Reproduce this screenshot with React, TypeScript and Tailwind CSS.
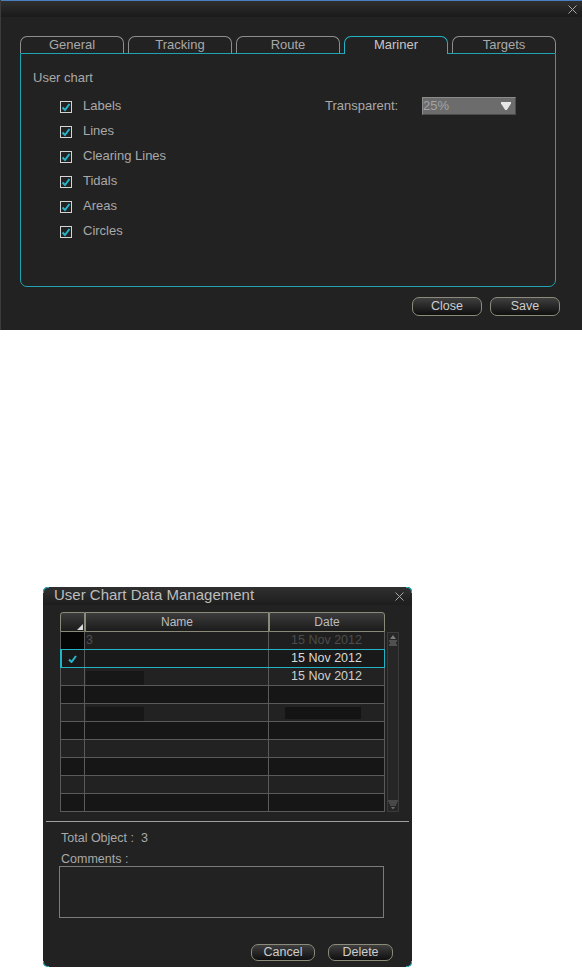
import { ReactNode } from "react";

const tabs = ["General", "Tracking", "Route", "Mariner", "Targets"];
const layers = ["Labels", "Lines", "Clearing Lines", "Tidals", "Areas", "Circles"];

function CloseX({ className }: { className?: string }) {
  return (
    <svg width="9" height="9" viewBox="0 0 9 9" className={className}>
      <path d="M0.5 0.5 L8.5 8.5 M8.5 0.5 L0.5 8.5" stroke="#a9a9a9" strokeWidth="1" />
    </svg>
  );
}

function CheckBox() {
  return (
    <svg width="12" height="12" viewBox="0 0 12 12">
      <rect x="0.5" y="0.5" width="11" height="11" fill="none" stroke="#d4d4d4" />
      <path d="M2.5 6.5 L5 9 L9.5 3" fill="none" stroke="#26b4c9" strokeWidth="2" />
    </svg>
  );
}

function Btn({ children, w }: { children: ReactNode; w: string }) {
  return (
    <button
      className={`${w} rounded-[7px] border border-[#8c8a78] bg-linear-to-b from-[#404040] to-[#101010] text-[12.5px] text-[#cdcdcd] leading-none`}
    >
      {children}
    </button>
  );
}

type Row = {
  name?: string;
  date?: string;
  dateColor?: string;
  bg: string;
  chkBg?: string;
  selected?: boolean;
  redactName?: boolean;
  redactDate?: boolean;
};

const rows: Row[] = [
  { name: "3", date: "15 Nov 2012", dateColor: "text-[#4c4c4c]", bg: "bg-[#1f1f1f]", chkBg: "bg-[#050505]" },
  { date: "15 Nov 2012", dateColor: "text-[#dadada]", bg: "bg-[#191919]", selected: true },
  { date: "15 Nov 2012", dateColor: "text-[#cfcfcf]", bg: "bg-[#222]", redactName: true },
  { bg: "bg-[#161616]" },
  { bg: "bg-[#222]", redactName: true, redactDate: true },
  { bg: "bg-[#161616]" },
  { bg: "bg-[#222]" },
  { bg: "bg-[#161616]" },
  { bg: "bg-[#222]" },
  { bg: "bg-[#161616]" },
];

export default function App() {
  return (
    <div className="w-[582px] h-[972px] bg-white font-['Liberation_Sans',Arial,sans-serif]">
      {/* Settings dialog */}
      <div className="h-[330px] bg-[#222] border-l border-[#3c3c3c] flex flex-col">
        <div className="h-px bg-[#4a80c2]" />
        <div className="h-[16px] bg-linear-to-b from-[#2f2f2f] to-[#1a1a1a] flex items-center justify-end pr-[5px]">
          <CloseX />
        </div>

        <div className="mt-[19px] ml-[19px] w-[536px]">
          <div className="flex gap-[4px] items-end">
            {tabs.map((t) =>
              t === "Mariner" ? (
                <div
                  key={t}
                  className="relative z-10 -mb-px w-[104px] h-[18px] rounded-t-[7px] border border-b-0 border-[#23b3c6] bg-[#222] text-center text-[13px] leading-[16px] text-[#c6c6c6]"
                >
                  {t}
                </div>
              ) : (
                <div
                  key={t}
                  className="w-[104px] h-[17px] rounded-t-[7px] border border-b-0 border-[#8e8e8e] text-center text-[13px] leading-[16px] text-[#a9a9a9]"
                >
                  {t}
                </div>
              )
            )}
          </div>
          <div className="h-[234px] border border-[#1fa2b4] rounded-b-[7px] pl-[12px] pt-[16px]">
            <div className="text-[13px] leading-[16px] text-[#a9a9a9]">User chart</div>
            <div className="mt-[8px] ml-[27px] flex flex-col">
              {layers.map((l, i) => (
                <div key={l} className="h-[25px] flex items-center">
                  <div className="w-[265px] flex items-center gap-[11px]">
                    <CheckBox />
                    <span className="text-[13px] leading-[16px] text-[#a9a9a9] -mt-[2px]">{l}</span>
                  </div>
                  {i === 0 && (
                    <>
                      <span className="w-[97px] text-[13px] leading-[16px] text-[#a9a9a9] -mt-[2px]">Transparent:</span>
                      <div className="w-[94px] h-[18px] -mt-[2px] bg-[#6c6c6c] border border-t-[#8c8c8c] border-l-[#8c8c8c] border-b-[#4c4c4c] border-r-[#4c4c4c] flex items-center justify-between pr-[4px]">
                        <span className="text-[13px] leading-none text-[#a3a3a3]">25%</span>
                        <svg width="10" height="8" viewBox="0 0 10 8">
                          <path d="M0 0 H10 V1.5 L5.8 8 H4.2 L0 1.5 Z" fill="#e6e6e6" />
                        </svg>
                      </div>
                    </>
                  )}
                </div>
              ))}
            </div>
          </div>
        </div>

        <div className="mt-[10px] flex justify-end gap-[8px] pr-[22px]">
          <Btn w="w-[70px] h-[19px]">Close</Btn>
          <Btn w="w-[70px] h-[19px]">Save</Btn>
        </div>
      </div>

      {/* User Chart Data Management dialog */}
      <div className="relative ml-[43px] mt-[257px] w-[369px] h-[380px] bg-[#222] rounded-[5px] flex flex-col">
        <div className="absolute left-0 top-0 w-[6px] h-[6px] border-t border-l border-[#25b4c8] rounded-tl-[5px]" />
        <div className="absolute right-0 top-0 w-[6px] h-[6px] border-t border-r border-[#25b4c8] rounded-tr-[5px]" />
        <div className="absolute left-0 bottom-0 w-[6px] h-[6px] border-b border-l border-[#25b4c8] rounded-bl-[5px]" />
        <div className="absolute right-0 bottom-0 w-[6px] h-[6px] border-b border-r border-[#25b4c8] rounded-br-[5px]" />

        <div className="h-[18px] rounded-t-[5px] bg-linear-to-b from-[#303030] to-[#1d1d1d] flex items-center justify-between pl-[11px] pr-[8px]">
          <span className="text-[15px] leading-[18px] text-[#bdbdbd] -mt-[2px]">User Chart Data Management</span>
          <CloseX />
        </div>

        <div className="mt-[7px] ml-[17px] flex gap-[2px]">
          <div className="w-[325px]">
            {/* header */}
            <div className="flex h-[20px]">
              <div className="relative w-[25px] border border-[#8a8a7a] rounded-tl-[3px] bg-linear-to-b from-[#3c3c3c] to-[#1c1c1c]">
                <svg width="6" height="6" viewBox="0 0 6 6" className="absolute right-[1px] bottom-[1px]">
                  <path d="M6 0 V6 H0 Z" fill="#dcdcdc" />
                </svg>
              </div>
              <div className="w-[184px] border border-[#8a8a7a] bg-linear-to-b from-[#3c3c3c] to-[#1c1c1c] text-center text-[12px] leading-[18px] text-[#bcbcbc]">
                Name
              </div>
              <div className="w-[116px] border border-[#8a8a7a] rounded-tr-[3px] bg-linear-to-b from-[#3c3c3c] to-[#1c1c1c] text-center text-[12px] leading-[18px] text-[#bcbcbc]">
                Date
              </div>
            </div>
            {/* rows */}
            {rows.map((r, i) => (
              <div key={i} className={`relative flex h-[18px] border-b border-[#5a5a5a] ${r.bg}`}>
                <div className={`w-[25px] border-l border-r border-[#5a5a5a] flex items-center justify-center ${r.chkBg ?? ""}`}>
                  {r.selected && (
                    <svg width="9" height="8" viewBox="0 0 9 8">
                      <path d="M1 4.5 L3.5 7 L8 1" fill="none" stroke="#27b6cb" strokeWidth="2" />
                    </svg>
                  )}
                </div>
                <div className="w-[184px] border-r border-[#5a5a5a] pl-[1px] text-[12.5px] leading-[16px] text-[#4f4f4f]">
                  {r.name}
                  {r.redactName && <div className="mt-[3px] w-[58px] h-[14px] bg-[#171717]" />}
                </div>
                <div className={`w-[116px] border-r border-[#5a5a5a] text-center text-[12.5px] leading-[16px] ${r.dateColor ?? ""}`}>
                  {r.date}
                  {r.redactDate && <div className="mt-[3px] ml-[16px] w-[76px] h-[12px] bg-[#141414]" />}
                </div>
                {r.selected && (
                  <div className="absolute -top-px left-0 right-0 -bottom-px border border-l-2 border-[#22b3c7] pointer-events-none" />
                )}
              </div>
            ))}
          </div>
          {/* scrollbar */}
          <div className="mt-[20px] w-[12px] h-[180px] bg-[#262626] border border-[#3b3b3b] flex flex-col justify-between items-center py-[1px]">
            <svg width="10" height="12" viewBox="0 0 10 12">
              <path d="M5 1 L8 5 H2 Z" fill="#7a7a7a" />
              <path d="M1 7 H9 M2 9 H8 M1 11 H9" stroke="#7a7a7a" strokeWidth="1" />
            </svg>
            <svg width="10" height="10" viewBox="0 0 10 10">
              <path d="M0 1 H10 M1 3 H9 M2 5 H8" stroke="#6a6a6a" strokeWidth="1" />
              <path d="M3 7 H7 L5 9.5 Z" fill="#6a6a6a" />
            </svg>
          </div>
        </div>

        <div className="mt-[9px] mx-[3px] h-px bg-[#a0a0a0]" />

        <div className="mt-[8px] pl-[18px] text-[12.5px] leading-[16px] text-[#a9a9a9]">Total Object :&nbsp; 3</div>
        <div className="mt-[6px] pl-[18px] text-[12.5px] leading-[14px] text-[#a9a9a9]">Comments :</div>
        <div className="ml-[16px] w-[325px] h-[52px] border border-[#7b7b7b]" />

        <div className="mt-[26px] flex justify-end gap-[13px] pr-[19px]">
          <Btn w="w-[64px] h-[17px]">Cancel</Btn>
          <Btn w="w-[65px] h-[17px]">Delete</Btn>
        </div>
      </div>
    </div>
  );
}
